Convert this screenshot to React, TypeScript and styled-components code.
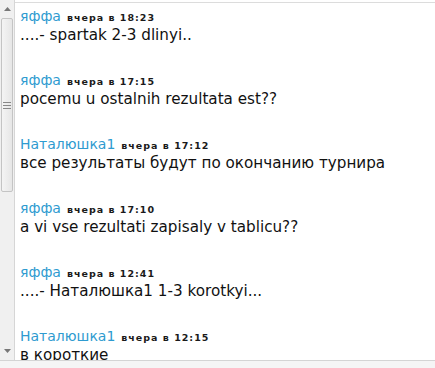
import React from "react";
import styled, { createGlobalStyle } from "styled-components";

const Global = createGlobalStyle`
  html, body { margin: 0; padding: 0; background: #fff; }
  body { font-family: "DejaVu Sans", sans-serif; }
`;

const Page = styled.div`
  width: 435px;
  height: 368px;
  display: flex;
  flex-direction: column;
  overflow: hidden;
`;

const Main = styled.div`
  display: flex;
  height: 360px;
`;

const Scrollbar = styled.div`
  width: 14px;
  flex-shrink: 0;
  background: #f0f0f0;
  border-right: 1px solid #d6d6d6;
  display: flex;
  flex-direction: column;
  align-items: stretch;
`;

const Arrow = styled.div`
  height: 18px;
  display: flex;
  align-items: center;
  justify-content: center;
`;

const Thumb = styled.div`
  height: 172px;
  margin: 0 1px;
  background: linear-gradient(to right, #f4f4f4, #e6e6e6);
  border: 1px solid #c4c4c4;
  border-radius: 2px;
  display: flex;
  align-items: center;
  justify-content: center;
`;

const Track = styled.div`
  flex: 1;
`;

const Content = styled.div`
  flex: 1;
  margin-top: 2px;
  border-top: 1px solid #dcdcdc;
  padding-left: 5px;
  overflow: hidden;
`;

const Message = styled.div`
  box-sizing: border-box;
  padding-top: 3px;
  height: 64px;
  flex-shrink: 0;
`;

const Header = styled.div`
  display: flex;
  align-items: baseline;
  gap: 6px;
  line-height: 20px;
`;

const Name = styled.span`
  color: #2e9bd0;
  font-size: 14px;
  font-family: "DejaVu Sans", sans-serif;
`;

const Time = styled.span`
  color: #1a1a1a;
  font-size: 9.5px;
  font-weight: bold;
  letter-spacing: 1px;
  font-family: "DejaVu Sans", sans-serif;
`;

const Text = styled.div`
  color: #111;
  font-size: 15.2px;
  line-height: 20px;
  margin-top: -3px;
  white-space: nowrap;
`;

const Footer = styled.div`
  flex: 1;
  background: #f5f5f5;
  border-top: 1px solid #d4d4d4;
`;

const Triangle = ({ up }: { up?: boolean }) => (
  <svg width="7" height="4" viewBox="0 0 7 4">
    <polygon points={up ? "0,4 7,4 3.5,0" : "0,0 7,0 3.5,4"} fill="#777" />
  </svg>
);

const Grip = () => (
  <svg width="8" height="7" viewBox="0 0 8 7">
    <rect x="0" y="0" width="8" height="1" fill="#888" />
    <rect x="0" y="3" width="8" height="1" fill="#888" />
    <rect x="0" y="6" width="8" height="1" fill="#888" />
  </svg>
);

const messages = [
  { name: "яффа", time: "вчера в 18:23", text: "....- spartak 2-3 dlinyi.." },
  { name: "яффа", time: "вчера в 17:15", text: "pocemu u ostalnih rezultata est??" },
  { name: "Наталюшка1", time: "вчера в 17:12", text: "все результаты будут по окончанию турнира" },
  { name: "яффа", time: "вчера в 17:10", text: "a vi vse rezultati zapisaly v tablicu??" },
  { name: "яффа", time: "вчера в 12:41", text: "....- Наталюшка1 1-3 korotkyi..." },
  { name: "Наталюшка1", time: "вчера в 12:15", text: "в короткие" },
];

export default function App() {
  return (
    <Page>
      <Global />
      <Main>
        <Scrollbar>
          <Arrow><Triangle up /></Arrow>
          <Thumb><Grip /></Thumb>
          <Track />
          <Arrow><Triangle /></Arrow>
        </Scrollbar>
        <Content>
          {messages.map((m, i) => (
            <Message key={i}>
              <Header>
                <Name>{m.name}</Name>
                <Time>{m.time}</Time>
              </Header>
              <Text>{m.text}</Text>
            </Message>
          ))}
        </Content>
      </Main>
      <Footer />
    </Page>
  );
}
